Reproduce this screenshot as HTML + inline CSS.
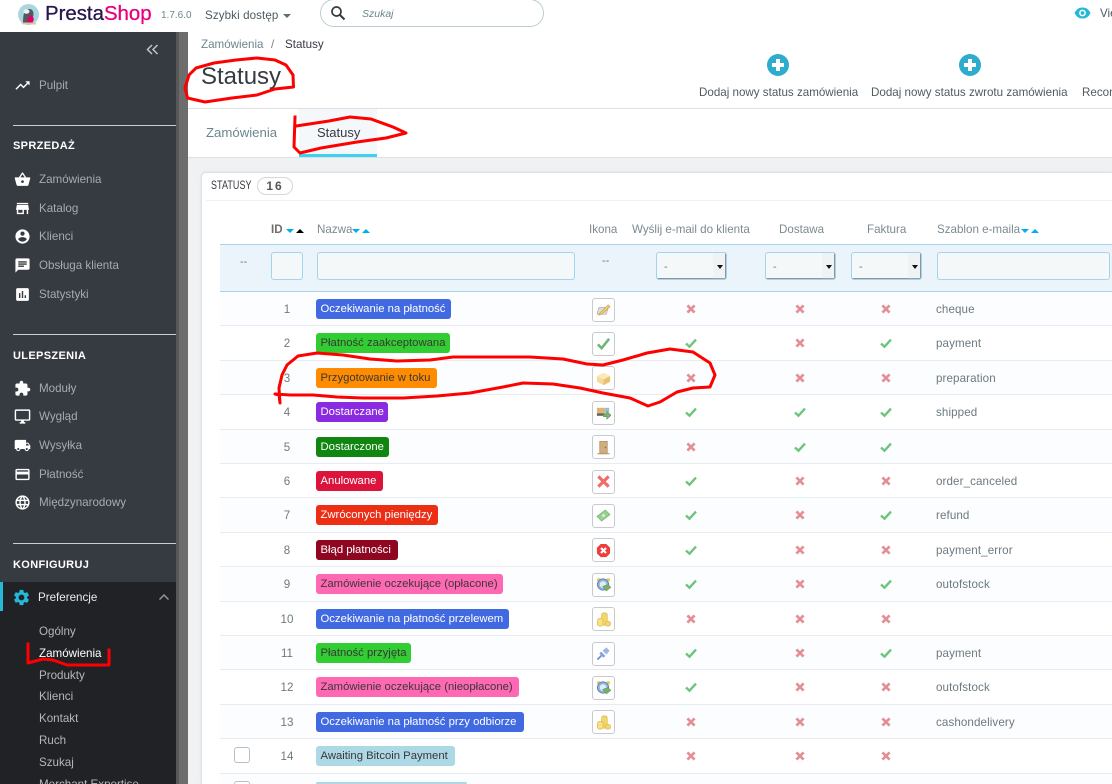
<!DOCTYPE html>
<html lang="pl">
<head>
<meta charset="utf-8">
<title>Statusy</title>
<style>
*{box-sizing:border-box}
html,body{margin:0;padding:0;width:1112px;height:784px;overflow:hidden;background:#eff1f2;font-family:"Liberation Sans","DejaVu Sans",sans-serif;font-size:11.6px;color:#363a41}
#wrap{position:absolute;left:0;top:0;width:1112px;height:784px;overflow:hidden;background:#eff1f2}
.a{position:absolute;white-space:nowrap}
#top{position:absolute;left:0;top:0;width:1112px;height:32px;background:#fff}
#side{position:absolute;left:0;top:32px;width:176px;height:752px;background:#363a41}
#dark{position:absolute;left:0;top:582px;width:176px;height:202px;background:#202226}
#sb{position:absolute;left:176px;top:32px;width:12px;height:752px;background:#6d6d6d;border-left:3px solid #585858}
.s{position:absolute;left:39px;color:#a6acb0;line-height:16px;white-space:nowrap;margin-top:1px}
.h{position:absolute;left:13px;color:#fff;font-weight:bold;font-size:11px;letter-spacing:.35px;line-height:14px}
.ln{position:absolute;left:13px;width:163px;height:1px;background:#c6d0d5}
.si{position:absolute;left:14px;width:17px;height:17px;fill:#fff;margin-top:1px}
.sub{position:absolute;left:39px;color:#b3b8bb;line-height:16px;white-space:nowrap;margin-top:1px}
#head{position:absolute;left:188px;top:32px;width:924px;height:77px;background:#fff;border-bottom:1px solid #dfdfdf}
#tabs{position:absolute;left:188px;top:109px;width:924px;height:49px;background:#fff;border-bottom:1px solid #dfdfdf}
#panel{position:absolute;left:201px;top:172px;width:911px;height:612px;background:#fff;border:1px solid #dbe2e5;border-right:0;border-bottom:0;border-radius:5px 0 0 0;box-shadow:0 0 2px rgba(0,0,0,.08)}
.th{position:absolute;top:223px;line-height:14px;color:#7b8a90;white-space:nowrap}
#fbar{position:absolute;left:220px;top:244px;width:892px;height:48px;background:#ebf4fa;border-top:1px solid #a7d5eb;border-bottom:1px solid #a7d5eb}
.inp{position:absolute;top:252px;height:28px;background:#f5f8f9;border:1px solid #a4d3ec;border-radius:3px}
.sel{position:absolute;top:252px;width:71px;height:28px;background:#f5f8f9;border:1px solid #a4d3ec;border-radius:3px;box-shadow:inset -1px -1px 0 #8f9498;color:#777;font-size:11px;line-height:28px;padding-left:7px}
.sel:after{content:"";position:absolute;right:3px;top:12px;border:3px solid transparent;border-top:4px solid #111}
.sel:before{content:"";position:absolute;right:1px;top:0;bottom:0;width:12px;background:#f0f3f4;border-bottom:1px solid #9aa0a4}
.dn,.up{position:absolute;top:229px;width:0;height:0;border-left:4px solid transparent;border-right:4px solid transparent}
.dn{border-top:4px solid #00aff0}
.up{border-bottom:4px solid #00aff0}
.r{position:absolute;left:220px;width:892px;height:34.4px;border-bottom:1px solid #e8ebf0;background:#fff}
.o{background:#fcfdfe}
.id{position:absolute;left:47px;width:40px;text-align:center;top:11px;line-height:14px;color:#6c7a80;font-style:normal}
.l{position:absolute;left:96px;top:7px;height:20px;border-radius:3px;line-height:21px;padding-left:4.5px;font-weight:normal;font-size:11.3px;white-space:nowrap;color:#fff}
.k{color:#383838}
.ic{position:absolute;left:372px;top:5.5px;width:23px;height:24px;border:1px solid #c7cbce;border-radius:3px;background:#fff}
.ic svg{position:absolute;left:3px;top:3.5px;width:15px;height:15px;opacity:.85}
.m{position:absolute;top:11px;width:12px;height:12px}
.c1{left:465px}.c2{left:574px}.c3{left:660px}
.t{position:absolute;left:716px;top:11px;line-height:14px;color:#6c7a80;letter-spacing:.1px}
</style>
</head>
<body>
<div id="wrap">
<svg width="0" height="0" style="position:absolute">
<defs>
<symbol id="y" viewBox="0 0 12 12"><path d="M1 6.500 4.500 9.700 11 2.600" fill="none" stroke="#6dc47c" stroke-width="2.400"/></symbol>
<symbol id="x" viewBox="0 0 12 12"><path d="M2.400 2.400 9.600 9.600M9.600 2.400 2.400 9.600" fill="none" stroke="#e28f95" stroke-width="2.700"/></symbol>
<symbol id="pen" viewBox="0 0 16 16"><path d="M3 6h10l-2 7H1z" fill="#d7d7d2" stroke="#9a9a94" stroke-width=".7"/><path d="M4 12 13 3l2 2-9 8-3 1z" fill="#f3c65a" stroke="#b98e2c" stroke-width=".7"/></symbol>
<symbol id="chk" viewBox="0 0 16 16"><path d="M2 9l4 4 8-10" fill="none" stroke="#5aa95e" stroke-width="2.800"/></symbol>
<symbol id="box" viewBox="0 0 16 16"><path d="M8 2l7 3.500v6L8 15l-7-3.500v-6z" fill="#f4d488"/><path d="M8 9 1 5.500 8 2l7 3.500z" fill="#fbe6ae"/><path d="M8 9v6l7-3.500v-6z" fill="#e5b75c"/></symbol>
<symbol id="trk" viewBox="0 0 16 16"><rect x="1" y="3" width="9" height="7" fill="#d8a862"/><rect x="1" y="9" width="11" height="2.500" fill="#444"/><rect x="10" y="3" width="4" height="5" fill="#7fb0e0"/><path d="M8 9.500h3.500V7l4.500 4-4.500 4v-2.500H8z" fill="#62ab4e" stroke="#3a7a30" stroke-width=".6"/></symbol>
<symbol id="dr" viewBox="0 0 16 16"><rect x="4" y="1.500" width="8" height="12.500" fill="#c99f6d" stroke="#a47a48" stroke-width=".8"/><rect x="1.500" y="14" width="13" height="1.300" fill="#b58c5b"/><circle cx="10" cy="8" r=".8" fill="#70502c"/></symbol>
<symbol id="red" viewBox="0 0 16 16"><path d="M2.500 2.500 13.500 13.500M13.500 2.500 2.500 13.500" fill="none" stroke="#ef5350" stroke-width="3.400"/></symbol>
<symbol id="mon" viewBox="0 0 16 16"><path d="M1 9 10 2l5 5-9 7z" fill="#86c77d" stroke="#5fa35a" stroke-width=".7"/><circle cx="8" cy="8" r="1.800" fill="#c5e8bd"/></symbol>
<symbol id="err" viewBox="0 0 16 16"><path d="M5 1h6l4 4v6l-4 4H5l-4-4V5z" fill="#ea1c1c"/><path d="M5.300 5.300l5.400 5.400M10.700 5.300l-5.400 5.400" stroke="#fff" stroke-width="2.200"/></symbol>
<symbol id="clk" viewBox="0 0 16 16"><circle cx="3" cy="3" r="2" fill="#e9c23e"/><circle cx="13" cy="3" r="2" fill="#e9c23e"/><circle cx="7.500" cy="8" r="6" fill="#7fa9d8" stroke="#3f6fa8"/><circle cx="7.500" cy="8" r="3.500" fill="#dfe9f3"/><path d="M7 10 13 8l3 3-5 4z" fill="#62a34f" stroke="#3a7a30" stroke-width=".5"/></symbol>
<symbol id="coin" viewBox="0 0 16 16"><rect x="6" y="1" width="6" height="13" rx="2" fill="#f2cf4d" stroke="#c9a02a" stroke-width=".6"/><rect x="1.500" y="7" width="6" height="8" rx="2" fill="#f6dc6c" stroke="#c9a02a" stroke-width=".6"/><rect x="10" y="10" width="5.500" height="5" rx="2" fill="#f2cf4d" stroke="#c9a02a" stroke-width=".6"/></symbol>
<symbol id="plg" viewBox="0 0 16 16"><path d="M1.500 14.500 6 10" stroke="#5c82c4" stroke-width="2"/><path d="M3.500 8 8 12.500l2-2L5.500 6z" fill="#6f93d6"/><path d="M7 5 11 1.500 14.500 5 11 9z" fill="#8eaae0"/></symbol>
</defs>
</svg>

<div id="top"></div>
<svg class="a" style="left:18px;top:3px" width="21" height="23" viewBox="0 0 21 23"><circle cx="10.500" cy="11.500" r="10.500" fill="#a9d7e0"/><path d="M5 20c0-8 1-14 6-14 3.500 0 4.500 2.500 4.500 5l-1 9z" fill="#55585c"/><ellipse cx="8.500" cy="8.500" rx="3" ry="2.300" fill="#efefef"/><path d="M9 20c0-4 2-7 4.500-8l2.500 4-1.500 4z" fill="#df0067"/><path d="M3 19.500h15v2H5z" fill="#d7c9a3"/></svg>
<div class="a" style="left:45px;top:2px;font-size:20.4px;line-height:24px;-webkit-text-stroke:.3px;color:#25164f">Presta<span style="color:#e6007e">Shop</span></div>
<div class="a" style="left:161px;top:10px;font-size:10px;line-height:12px;color:#6c868e">1.7.6.0</div>
<div class="a" style="left:205px;top:8px;line-height:15px;color:#4b5a60;letter-spacing:.1px">Szybki dostęp</div>
<div class="a" style="left:283px;top:14px;border:4px solid transparent;border-top:4px solid #5f6d73"></div>
<div class="a" style="left:320px;top:-1px;width:224px;height:28px;border:1px solid #bbcdd2;border-radius:14px;background:#fff"></div>
<svg class="a" style="left:330px;top:5px" width="16" height="16" viewBox="0 0 16 16"><circle cx="6.500" cy="6.500" r="4.500" fill="none" stroke="#363a41" stroke-width="1.700"/><path d="M10 10l4.500 4.500" stroke="#363a41" stroke-width="2"/></svg>
<div class="a" style="left:362px;top:7px;font-style:italic;font-size:10.500px;line-height:14px;color:#6c868e">Szukaj</div>
<svg class="a" style="left:1074px;top:6px" width="17" height="14" viewBox="0 0 17 14"><path d="M.500 7C2.500 3 5 1.500 8.500 1.500S14.500 3 16.500 7c-2 4-4.500 5.500-8 5.500S2.500 11 .500 7z" fill="#25b9d7"/><circle cx="8.500" cy="7" r="3.400" fill="#fff"/><circle cx="8.500" cy="7" r="1.900" fill="#25b9d7"/></svg>
<div class="a" style="left:1100px;top:6px;width:12px;overflow:hidden;line-height:15px;color:#4b5a60">View my shop</div>

<div id="side"></div>
<div id="dark"></div>
<div id="sb"></div>
<div class="a" style="left:0;top:582px;width:3px;height:29px;background:#25b9d7"></div>

<svg class="a" style="left:146px;top:44px" width="13" height="11" viewBox="0 0 13 11"><path d="M6 1 1.500 5.500 6 10M11.500 1 7 5.500 11.500 10" fill="none" stroke="#bcc4c8" stroke-width="1.500"/></svg>

<svg class="si" style="top:76px" viewBox="0 0 24 24"><path d="M16 6l2.290 2.290-4.880 4.880-4-4L2 16.590 3.410 18l6-6 4 4 6.300-6.290L22 12V6z"/></svg>
<div class="s" style="top:77px">Pulpit</div>
<div class="ln" style="top:125px"></div>
<div class="h" style="top:139px">SPRZEDAŻ</div>

<svg class="si" style="top:170px" viewBox="0 0 24 24"><path d="M17.210 9l-4.380-6.560c-.19-.28-.51-.42-.83-.42-.32 0-.64.14-.83.43L6.790 9H2c-.55 0-1 .45-1 1 0 .09.01.18.04.27l2.540 9.270c.23.84 1 1.460 1.920 1.460h13c.92 0 1.690-.62 1.930-1.460l2.540-9.270L23 10c0-.55-.45-1-1-1h-4.790zM9 9l3-4.400L15 9H9zm3 8c-1.100 0-2-.9-2-2s.9-2 2-2 2 .9 2 2-.9 2-2 2z"/></svg>
<div class="s" style="top:171px">Zamówienia</div>
<svg class="si" style="top:199px" viewBox="0 0 24 24"><path d="M20 4H4v2h16V4zm1 10v-2l-1-5H4l-1 5v2h1v6h10v-6h4v6h2v-6h1zm-9 4H6v-4h6v4z"/></svg>
<div class="s" style="top:200px">Katalog</div>
<svg class="si" style="top:227px" viewBox="0 0 24 24"><path d="M12 2C6.480 2 2 6.480 2 12s4.480 10 10 10 10-4.480 10-10S17.520 2 12 2zm0 3c1.660 0 3 1.340 3 3s-1.340 3-3 3-3-1.340-3-3 1.340-3 3-3zm0 14.200c-2.500 0-4.710-1.280-6-3.220.03-1.990 4-3.080 6-3.080 1.990 0 5.970 1.090 6 3.080-1.290 1.940-3.500 3.220-6 3.220z"/></svg>
<div class="s" style="top:228px">Klienci</div>
<svg class="si" style="top:256px" viewBox="0 0 24 24"><path d="M20 2H4c-1.100 0-1.990.9-1.990 2L2 22l4-4h14c1.100 0 2-.9 2-2V4c0-1.100-.9-2-2-2zM6 9h12v2H6V9zm8 5H6v-2h8v2zm4-6H6V6h12v2z"/></svg>
<div class="s" style="top:257px">Obsługa klienta</div>
<svg class="si" style="top:285px" viewBox="0 0 24 24"><path d="M19 3H5c-1.100 0-2 .9-2 2v14c0 1.100.9 2 2 2h14c1.100 0 2-.9 2-2V5c0-1.100-.9-2-2-2zM9 17H7v-7h2v7zm4 0h-2V7h2v10zm4 0h-2v-4h2v4z"/></svg>
<div class="s" style="top:286px">Statystyki</div>

<div class="ln" style="top:334px"></div>
<div class="h" style="top:349px">ULEPSZENIA</div>
<svg class="si" style="top:379px" viewBox="0 0 24 24"><path d="M20.500 11H19V7c0-1.100-.9-2-2-2h-4V3.500C13 2.120 11.880 1 10.500 1S8 2.120 8 3.500V5H4c-1.100 0-1.990.9-1.990 2v3.800H3.500c1.490 0 2.700 1.210 2.700 2.700s-1.210 2.700-2.700 2.700H2V20c0 1.100.9 2 2 2h3.800v-1.500c0-1.490 1.210-2.700 2.700-2.700 1.490 0 2.700 1.210 2.700 2.700V22H17c1.100 0 2-.9 2-2v-4h1.500c1.380 0 2.500-1.120 2.500-2.500S21.880 11 20.500 11z"/></svg>
<div class="s" style="top:380px">Moduły</div>
<svg class="si" style="top:407px" viewBox="0 0 24 24"><path d="M21 2H3c-1.100 0-2 .9-2 2v12c0 1.100.9 2 2 2h7v2H8v2h8v-2h-2v-2h7c1.100 0 2-.9 2-2V4c0-1.100-.9-2-2-2zm0 14H3V4h18v12z"/></svg>
<div class="s" style="top:408px">Wygląd</div>
<svg class="si" style="top:436px" viewBox="0 0 24 24"><path d="M20 8h-3V4H3c-1.100 0-2 .9-2 2v11h2c0 1.660 1.340 3 3 3s3-1.340 3-3h6c0 1.660 1.340 3 3 3s3-1.340 3-3h2v-5l-3-4zM6 18.500c-.83 0-1.500-.67-1.500-1.500s.67-1.500 1.500-1.500 1.500.67 1.500 1.500-.67 1.500-1.500 1.500zm13.500-9l1.960 2.500H17V9.500h2.500zm-1.500 9c-.83 0-1.500-.67-1.500-1.500s.67-1.500 1.500-1.500 1.500.67 1.500 1.500-.67 1.500-1.500 1.500z"/></svg>
<div class="s" style="top:437px">Wysyłka</div>
<svg class="si" style="top:465px" viewBox="0 0 24 24"><path d="M20 4H4c-1.110 0-1.990.89-1.990 2L2 18c0 1.110.89 2 2 2h16c1.110 0 2-.89 2-2V6c0-1.110-.89-2-2-2zm0 14H4v-6h16v6zm0-10H4V6h16v2z"/></svg>
<div class="s" style="top:466px">Płatność</div>
<svg class="si" style="top:493px" viewBox="0 0 24 24"><path d="M11.990 2C6.470 2 2 6.480 2 12s4.470 10 9.990 10C17.520 22 22 17.520 22 12S17.520 2 11.990 2zm6.930 6h-2.950c-.32-1.250-.78-2.450-1.380-3.560 1.840.63 3.370 1.910 4.330 3.560zM12 4.040c.83 1.200 1.480 2.530 1.910 3.960h-3.820c.43-1.430 1.080-2.760 1.910-3.960zM4.260 14C4.100 13.360 4 12.690 4 12s.1-1.360.26-2h3.380c-.08.66-.14 1.320-.14 2 0 .68.06 1.340.14 2H4.260zm.82 2h2.950c.32 1.250.78 2.450 1.380 3.560-1.840-.63-3.370-1.900-4.330-3.560zm2.950-8H5.080c.96-1.660 2.490-2.930 4.330-3.560C8.810 5.550 8.350 6.750 8.030 8zM12 19.960c-.83-1.200-1.480-2.530-1.910-3.960h3.820c-.43 1.430-1.080 2.760-1.910 3.960zM14.340 14H9.660c-.09-.66-.16-1.320-.16-2 0-.68.07-1.350.16-2h4.680c.09.65.16 1.320.16 2 0 .68-.07 1.340-.16 2zm.25 5.560c.6-1.110 1.060-2.310 1.380-3.560h2.950c-.96 1.650-2.490 2.930-4.330 3.560zM16.360 14c.08-.66.14-1.320.14-2 0-.68-.06-1.340-.14-2h3.380c.16.64.26 1.310.26 2s-.1 1.360-.26 2h-3.380z"/></svg>
<div class="s" style="top:494px">Międzynarodowy</div>

<div class="ln" style="top:543px"></div>
<div class="h" style="top:558px">KONFIGURUJ</div>
<svg class="si" style="top:587px;left:12px;width:19px;height:19px;fill:#25b9d7" viewBox="0 0 24 24"><path d="M19.140 12.940c.04-.3.06-.61.06-.94 0-.32-.02-.64-.07-.94l2.030-1.580c.18-.14.23-.41.12-.61l-1.920-3.320c-.12-.22-.37-.29-.59-.22l-2.390.96c-.5-.38-1.030-.7-1.620-.94l-.36-2.540c-.04-.24-.24-.41-.48-.41h-3.840c-.24 0-.43.17-.47.41l-.36 2.540c-.59.24-1.130.57-1.620.94l-2.390-.96c-.22-.08-.47 0-.59.22L2.740 8.870c-.12.21-.08.47.12.61l2.030 1.580c-.05.3-.09.63-.09.94s.02.64.07.94l-2.030 1.580c-.18.14-.23.41-.12.61l1.920 3.320c.12.22.37.29.59.22l2.390-.96c.5.38 1.030.7 1.620.94l.36 2.540c.05.24.24.41.48.41h3.840c.24 0 .44-.17.47-.41l.36-2.540c.59-.24 1.130-.56 1.620-.94l2.390.96c.22.08.47 0 .59-.22l1.920-3.320c.12-.22.07-.47-.12-.61l-2.010-1.580zM12 15.600c-1.980 0-3.600-1.620-3.600-3.600s1.620-3.600 3.600-3.600 3.600 1.620 3.600 3.600-1.620 3.600-3.600 3.600z"/></svg>
<div class="s" style="top:589px;left:38px;color:#e8ebec">Preferencje</div>
<svg class="a" style="left:158px;top:593px" width="12" height="8" viewBox="0 0 12 8"><path d="M1.500 6.500 6 2l4.500 4.500" fill="none" stroke="#8f979b" stroke-width="1.500"/></svg>
<div class="sub" style="top:623px">Ogólny</div>
<div class="sub" style="top:645px;color:#fff">Zamówienia</div>
<div class="sub" style="top:667px">Produkty</div>
<div class="sub" style="top:688px">Klienci</div>
<div class="sub" style="top:710px">Kontakt</div>
<div class="sub" style="top:732px">Ruch</div>
<div class="sub" style="top:754px">Szukaj</div>
<div class="sub" style="top:776px;height:8px;overflow:hidden">Merchant Expertise</div>

<div id="head"></div>
<div class="a" style="left:201px;top:38px;line-height:14px;color:#6c868e">Zamówienia</div>
<div class="a" style="left:271px;top:38px;line-height:14px;color:#6c868e">/</div>
<div class="a" style="left:285px;top:38px;line-height:14px;color:#363a41">Statusy</div>
<div class="a" style="left:201px;top:63px;font-size:24px;line-height:28px;color:#363a41">Statusy</div>

<svg class="a" style="left:767px;top:54px" width="22" height="22" viewBox="0 0 22 22"><circle cx="11" cy="11" r="11" fill="#2eacce"/><path d="M11 5v12M5 11h12" stroke="#fff" stroke-width="4"/></svg>
<div class="a" style="left:699px;top:86px;line-height:14px;color:#4f5b60">Dodaj nowy status zamówienia</div>
<svg class="a" style="left:959px;top:54px" width="22" height="22" viewBox="0 0 22 22"><circle cx="11" cy="11" r="11" fill="#2eacce"/><path d="M11 5v12M5 11h12" stroke="#fff" stroke-width="4"/></svg>
<div class="a" style="left:871px;top:86px;line-height:14px;color:#4f5b60">Dodaj nowy status zwrotu zamówienia</div>
<div class="a" style="left:1082px;top:86px;width:30px;overflow:hidden;line-height:14px;color:#4f5b60">Recommended</div>

<div id="tabs"></div>
<div class="a" style="left:206px;top:125px;font-size:13.200px;line-height:16px;color:#6c868e">Zamówienia</div>
<div class="a" style="left:299px;top:109px;width:78px;height:48px;background:#f4f8fb;border-bottom:3px solid #3ed2f2"></div>
<div class="a" style="left:317px;top:125px;font-size:13px;line-height:16px;color:#363a41">Statusy</div>

<div id="panel"></div>
<div class="a" style="left:211px;top:180px;font-size:11.500px;line-height:13px;color:#363a41;transform-origin:0 0;transform:scaleX(.78);letter-spacing:.1px">STATUSY</div>
<div class="a" style="left:257px;top:177px;width:36px;height:18px;border:1px solid #d4d8da;border-radius:9px;text-align:center;font-weight:bold;font-size:12px;line-height:16px;color:#555;letter-spacing:2px">16</div>
<div class="a" style="left:206px;top:200px;width:906px;height:1px;background:#eef0f2"></div>

<div class="th" style="left:271px;font-weight:bold;color:#6e6e6e">ID</div>
<div class="dn" style="left:286px"></div><div class="up" style="left:296px;border-bottom-color:#000"></div>
<div class="th" style="left:317px">Nazwa</div>
<div class="dn" style="left:352px"></div><div class="up" style="left:362px"></div>
<div class="th" style="left:589px">Ikona</div>
<div class="th" style="left:632px">Wyślij e-mail do klienta</div>
<div class="th" style="left:779px">Dostawa</div>
<div class="th" style="left:867px">Faktura</div>
<div class="th" style="left:937px">Szablon e-maila</div>
<div class="dn" style="left:1021px"></div><div class="up" style="left:1031px"></div>

<div id="fbar"></div>
<div class="a" style="left:240px;top:255px;line-height:14px;color:#6c7a80;font-size:11px">--</div>
<div class="inp" style="left:271px;width:32px"></div>
<div class="inp" style="left:317px;width:258px"></div>
<div class="a" style="left:602px;top:254px;line-height:14px;color:#6c7a80;font-size:11px">--</div>
<div class="sel" style="left:656px">-</div>
<div class="sel" style="left:765px">-</div>
<div class="sel" style="left:851px">-</div>
<div class="inp" style="left:937px;width:173px"></div>

<div class="r o" style="top:292px"><i class="id">1</i><b class="l" style="background:#4169e1;width:135px">Oczekiwanie na płatność</b><span class="ic"><svg><use href="#pen"/></svg></span><svg class="m c1"><use href="#x"/></svg><svg class="m c2"><use href="#x"/></svg><svg class="m c3"><use href="#x"/></svg><span class="t">cheque</span></div>
<div class="r" style="top:326.400px"><i class="id">2</i><b class="l k" style="background:#32cd32;width:134px">Płatność zaakceptowana</b><span class="ic"><svg><use href="#chk"/></svg></span><svg class="m c1"><use href="#y"/></svg><svg class="m c2"><use href="#x"/></svg><svg class="m c3"><use href="#y"/></svg><span class="t">payment</span></div>
<div class="r o" style="top:360.800px"><i class="id">3</i><b class="l k" style="background:#ff8c00;width:121px">Przygotowanie w toku</b><span class="ic"><svg><use href="#box"/></svg></span><svg class="m c1"><use href="#x"/></svg><svg class="m c2"><use href="#x"/></svg><svg class="m c3"><use href="#x"/></svg><span class="t">preparation</span></div>
<div class="r" style="top:395.200px"><i class="id">4</i><b class="l" style="background:#8a2be2;width:72px">Dostarczane</b><span class="ic"><svg><use href="#trk"/></svg></span><svg class="m c1"><use href="#y"/></svg><svg class="m c2"><use href="#y"/></svg><svg class="m c3"><use href="#y"/></svg><span class="t">shipped</span></div>
<div class="r o" style="top:429.600px"><i class="id">5</i><b class="l" style="background:#108510;width:73px">Dostarczone</b><span class="ic"><svg><use href="#dr"/></svg></span><svg class="m c1"><use href="#x"/></svg><svg class="m c2"><use href="#y"/></svg><svg class="m c3"><use href="#y"/></svg></div>
<div class="r" style="top:464px"><i class="id">6</i><b class="l" style="background:#dc143c;width:67px">Anulowane</b><span class="ic"><svg><use href="#red"/></svg></span><svg class="m c1"><use href="#y"/></svg><svg class="m c2"><use href="#x"/></svg><svg class="m c3"><use href="#x"/></svg><span class="t">order_canceled</span></div>
<div class="r o" style="top:498.400px"><i class="id">7</i><b class="l" style="background:#ec2e15;width:122px">Zwróconych pieniędzy</b><span class="ic"><svg><use href="#mon"/></svg></span><svg class="m c1"><use href="#y"/></svg><svg class="m c2"><use href="#x"/></svg><svg class="m c3"><use href="#y"/></svg><span class="t">refund</span></div>
<div class="r" style="top:532.800px"><i class="id">8</i><b class="l" style="background:#8f0621;width:82px">Błąd płatności</b><span class="ic"><svg><use href="#err"/></svg></span><svg class="m c1"><use href="#y"/></svg><svg class="m c2"><use href="#x"/></svg><svg class="m c3"><use href="#x"/></svg><span class="t">payment_error</span></div>
<div class="r o" style="top:567.200px"><i class="id">9</i><b class="l k" style="background:#ff69b4;width:187px">Zamówienie oczekujące (opłacone)</b><span class="ic"><svg><use href="#clk"/></svg></span><svg class="m c1"><use href="#y"/></svg><svg class="m c2"><use href="#x"/></svg><svg class="m c3"><use href="#y"/></svg><span class="t">outofstock</span></div>
<div class="r" style="top:601.600px"><i class="id">10</i><b class="l" style="background:#4169e1;width:193px">Oczekiwanie na płatność przelewem</b><span class="ic"><svg><use href="#coin"/></svg></span><svg class="m c1"><use href="#x"/></svg><svg class="m c2"><use href="#x"/></svg><svg class="m c3"><use href="#x"/></svg></div>
<div class="r o" style="top:636px"><i class="id">11</i><b class="l k" style="background:#32cd32;width:95px">Płatność przyjęta</b><span class="ic"><svg><use href="#plg"/></svg></span><svg class="m c1"><use href="#y"/></svg><svg class="m c2"><use href="#x"/></svg><svg class="m c3"><use href="#y"/></svg><span class="t">payment</span></div>
<div class="r" style="top:670.400px"><i class="id">12</i><b class="l k" style="background:#ff69b4;width:203px">Zamówienie oczekujące (nieopłacone)</b><span class="ic"><svg><use href="#clk"/></svg></span><svg class="m c1"><use href="#y"/></svg><svg class="m c2"><use href="#x"/></svg><svg class="m c3"><use href="#x"/></svg><span class="t">outofstock</span></div>
<div class="r o" style="top:704.800px"><i class="id">13</i><b class="l" style="background:#4169e1;width:208px">Oczekiwanie na płatność przy odbiorze</b><span class="ic"><svg><use href="#coin"/></svg></span><svg class="m c1"><use href="#x"/></svg><svg class="m c2"><use href="#x"/></svg><svg class="m c3"><use href="#x"/></svg><span class="t">cashondelivery</span></div>
<div class="r" style="top:739.200px"><i class="id">14</i><b class="l k" style="background:#add8e6;width:139px">Awaiting Bitcoin Payment</b><svg class="m c1"><use href="#x"/></svg><svg class="m c2"><use href="#x"/></svg><svg class="m c3"><use href="#x"/></svg></div>
<div class="r o" style="top:773.600px;height:10.400px;border-bottom:0;overflow:hidden"><b class="l k" style="background:#add8e6;width:151px;top:8px;height:3px"></b></div>
<div class="a" style="left:234px;top:747px;width:16px;height:16px;border:1px solid #b7c0c5;border-radius:3px;background:#fff"></div>
<div class="a" style="left:234px;top:781px;width:16px;height:3px;border:1px solid #b7c0c5;border-bottom:0;border-radius:3px 3px 0 0;background:#fff"></div>

<svg class="a" style="left:0;top:0;pointer-events:none" width="1112" height="784" viewBox="0 0 1112 784" fill="none" stroke="#f00" stroke-width="3" stroke-linejoin="round" stroke-linecap="square">
<path d="M293 75 286 65 275 60 257 58 236 60 214 63 196 68 189 75 185 88 187.500 98 205 102 232 98 257 95 275 89 293.500 87z"/>
<path d="M295 117 294 147 300 153 321 148 357 142 386 138 406 133 393 127 371 119 350 117 329 121 296 126"/>
<path d="M280 403 279 395 275 394 290 395 313 395 337 397 363 398 403 398 437 396 470 393 503 387 523 383 553 384 580 388 603 393 630 398 648 406 660 402 677 392 693 388 710 387 715 375 710 363 693 352 670 349 647 353 623 360 603 365 587 364 563 359 530 357 487 357 453 357 430 360 397 361 370 359 343 355 317 353 298 356 287 365 282 375 279 388z"/>
<path d="M28 644 28 663 43 659 53 660 67 665 109 665 109 650"/>
</svg>
</div>
</body>
</html>
